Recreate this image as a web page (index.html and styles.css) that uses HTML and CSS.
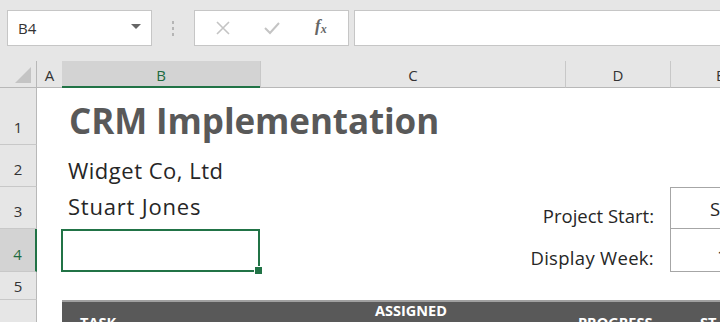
FILE: index.html
```html
<!DOCTYPE html>
<html>
<head>
<meta charset="utf-8">
<link rel="stylesheet" href="styles.css">
</head>
<body>
<div class="app">
  <div class="toolbar">
    <div class="namebox"><span>B4</span><span class="caret"></span></div>
    <div class="dots"><i></i><i></i><i></i></div>
    <div class="fbtns">
      <svg class="ico" width="16" height="16" viewBox="0 0 16 16"><path d="M2 2 L14 14 M14 2 L2 14" stroke="#c4c4c4" stroke-width="1.6" fill="none"/></svg>
      <svg class="ico" width="18" height="16" viewBox="0 0 18 16"><path d="M2 8 L7 13 L16 3" stroke="#c4c4c4" stroke-width="2" fill="none"/></svg>
      <span class="fx">f<sub>x</sub></span>
    </div>
    <div class="finput"></div>
  </div>
  <div class="sheet">
    <div class="corner"><span class="tri"></span></div>
    <div class="ch">A</div>
    <div class="ch sel">B</div>
    <div class="ch bl">C</div>
    <div class="ch bl">D</div>
    <div class="ch bl last">E</div>

    <div class="rh r1">1</div>
    <div class="cell title">CRM Implementation</div>

    <div class="rh r2">2</div>
    <div class="cell sub">Widget Co, Ltd</div>

    <div class="rh r3">3</div>
    <div class="cell sub r3c">Stuart Jones</div>
    <div class="cell label r3l">Project Start:</div>
    <div class="cell box r3b">S</div>

    <div class="rh r4 sel">4</div>
    <div class="cell active"><span class="handle"></span></div>
    <div class="cell label r4l">Display Week:</div>
    <div class="cell box r4b">1</div>

    <div class="rh r5">5</div>

    <div class="rh r6"></div>
    <div class="thead">
      <div class="th task">TASK</div>
      <div class="th assigned">ASSIGNED</div>
      <div class="th progress">PROGRESS</div>
      <div class="th start">ST</div>
    </div>
  </div>
</div>
</body>
</html>
```
FILE: styles.css
```css
* { box-sizing: border-box; }
html, body { margin: 0; padding: 0; }
body {
  width: 720px; height: 322px; overflow: hidden;
  background: #fff;
  font-family: "Open Sans", "Liberation Sans", sans-serif;
}
.app { display: flex; flex-direction: column; width: 720px; overflow: hidden; }
.toolbar {
  height: 61px;
  background: #e6e6e6;
  display: flex;
  align-items: flex-start;
  padding: 10px 0 0 7px;
}
.namebox {
  width: 145px; height: 36px;
  background: #fff;
  border: 1px solid #c6c6c6;
  display: flex; align-items: center; justify-content: space-between;
  padding: 0 10px 0 10px;
  font-size: 15px; color: #333;
}
.caret {
  width: 0; height: 0;
  border-left: 5px solid transparent;
  border-right: 5px solid transparent;
  border-top: 5px solid #666;
  margin-top: -3px;
}
.dots {
  width: 42px; height: 36px;
  display: flex; flex-direction: column; align-items: center; justify-content: center; gap: 3px;
}
.dots i { display: block; width: 2px; height: 3px; background: #b5b5b5; }
.fbtns {
  width: 155px; height: 36px;
  background: #fff;
  border: 1px solid #c6c6c6;
  display: flex; align-items: center;
  padding-left: 20px;
}
.fbtns .ico:first-child { margin-right: 32px; }
.fbtns .ico:nth-child(2) { margin-right: 34px; }
.fx {
  font-family: "Liberation Serif", serif;
  font-style: italic; font-weight: bold;
  font-size: 17px; color: #666;
  margin-top: -4px;
}
.fx sub { font-size: 12px; vertical-align: -2px; }
.finput {
  flex: 1; height: 36px; margin-left: 5px;
  background: #fff;
  border: 1px solid #c6c6c6;
  border-right: none;
}

.sheet {
  display: grid;
  grid-template-columns: 37px 25px 198px 305px 105px 50px;
  grid-template-rows: 27px 57px 42px 42px 43px 28px 30px;
  position: relative;
}
.corner {
  background: #e6e6e6;
  border-right: 1px solid #b8b8b8;
  border-bottom: 1px solid #b8b8b8;
  position: relative;
}
.tri {
  position: absolute; right: 5px; bottom: 4px;
  width: 0; height: 0;
  border-left: 16px solid transparent;
  border-bottom: 16px solid #c4c4c4;
}
.ch {
  background: #e6e6e6;
  border-bottom: 1px solid #b8b8b8;
  display: flex; align-items: center; justify-content: center;
  font-size: 15px; color: #333; padding-top: 2px;
}
.ch.bl { border-left: 1px solid #c8c8c8; }
.ch.last { justify-content: flex-start; padding-left: 45px; overflow: hidden; }
.ch.sel {
  background: #d3d3d3;
  color: #1e6b40;
  border-bottom: 2px solid #217346;
}
.rh {
  grid-column: 1;
  background: #e6e6e6;
  border-right: 1px solid #b8b8b8;
  border-bottom: 1px solid #c8c8c8;
  display: flex; align-items: flex-end; justify-content: center;
  padding-bottom: 7px;
  font-size: 15px; color: #333;
}
.rh.sel {
  background: #d3d3d3;
  color: #1e6b40;
  border-right: 2px solid #217346;
}
.r1 { grid-row: 2; }
.r2 { grid-row: 3; }
.r3 { grid-row: 4; }
.r4 { grid-row: 5; }
.r5 { grid-row: 6; padding-bottom: 3px; }
.r6 { grid-row: 7; border-bottom: none; }

.cell { display: flex; align-items: flex-end; white-space: nowrap; }
.title {
  grid-row: 2; grid-column: 3 / 5;
  font-weight: bold; font-size: 35px; color: #595959;
  padding-left: 7px; padding-bottom: 3px;
  line-height: 1.2;
  letter-spacing: -0.1px;
}
.sub {
  grid-row: 3; grid-column: 3 / 5;
  font-size: 22px; color: #262626;
  padding-left: 6px; padding-bottom: 2px;
  letter-spacing: 0.5px;
  line-height: 1.3;
}
.sub.r3c { grid-row: 4; padding-bottom: 8px; font-size: 22px; letter-spacing: 0.8px; }
.label {
  grid-column: 4 / 6; justify-content: flex-end;
  font-size: 18.5px; color: #262626;
  padding-right: 16px; padding-bottom: 2px;
  line-height: 1.3;
}
.r3l { grid-row: 4; padding-bottom: 1px; }
.r4l { grid-row: 5; padding-bottom: 2px; letter-spacing: 0.3px; }
.box {
  grid-column: 6;
  border: 1px solid #a6a6a6;
  border-right: none;
  font-size: 18.5px; color: #262626;
  line-height: 1.3;
  padding-bottom: 7px;
  overflow: hidden;
}
.r3b { grid-row: 4; padding-left: 39px; }
.r4b { grid-row: 5; border-top: none; padding-left: 46px; padding-bottom: 3px; }
.active {
  grid-row: 5; grid-column: 3;
  border: 2px solid #217346;
  margin: 0 0 0 -1px;
  position: relative;
}
.handle {
  position: absolute; right: -5px; bottom: -5px;
  width: 7px; height: 7px;
  background: #217346;
  border: 1px solid #fff;
  box-sizing: content-box;
}
.thead {
  grid-row: 7; grid-column: 3 / 7;
  background: #595959;
  border-top: 2px solid #a0a0a0;
  position: relative;
  overflow: hidden;
  color: #fff; font-weight: bold; font-size: 14.5px;
}
.th { position: absolute; white-space: nowrap; }
.task { left: 18px; top: 11px; }
.assigned { left: 313px; top: -1px; }
.progress { left: 516px; top: 11px; }
.start { left: 638px; top: 11px; }
```
